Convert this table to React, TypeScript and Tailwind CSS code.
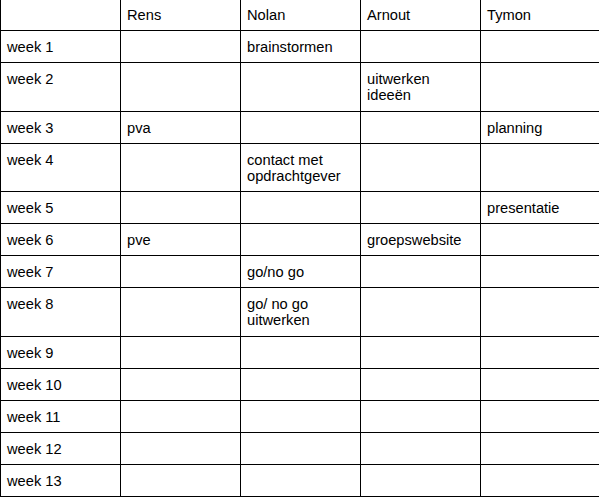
import React from "react";

const headers = ["", "Rens", "Nolan", "Arnout", "Tymon"];

type Row = { h: string; cells: string[][] };

const rows: Row[] = [
  { h: "h-[32px]", cells: [["week 1"], [], ["brainstormen"], [], []] },
  { h: "h-[49px]", cells: [["week 2"], [], [], ["uitwerken", "ideeën"], []] },
  { h: "h-[32px]", cells: [["week 3"], ["pva"], [], [], ["planning"]] },
  { h: "h-[48px]", cells: [["week 4"], [], ["contact met", "opdrachtgever"], [], []] },
  { h: "h-[32px]", cells: [["week 5"], [], [], [], ["presentatie"]] },
  { h: "h-[32px]", cells: [["week 6"], ["pve"], [], ["groepswebsite"], []] },
  { h: "h-[32px]", cells: [["week 7"], [], ["go/no go"], [], []] },
  { h: "h-[49px]", cells: [["week 8"], [], ["go/ no go", "uitwerken"], [], []] },
  { h: "h-[32px]", cells: [["week 9"], [], [], [], []] },
  { h: "h-[32px]", cells: [["week 10"], [], [], [], []] },
  { h: "h-[32px]", cells: [["week 11"], [], [], [], []] },
  { h: "h-[32px]", cells: [["week 12"], [], [], [], []] },
  { h: "h-[32px]", cells: [["week 13"], [], [], [], []] },
];

function Cell({ lines, h, last }: { lines: string[]; h: string; last: boolean }) {
  return (
    <div
      className={`${h} ${last ? "w-[119px]" : "w-[120px]"} shrink-0 border-l border-b border-black pl-[6px] pt-[8px] box-border`}
    >
      {lines.map((l, i) => (
        <div key={i} className="leading-[16px] whitespace-nowrap">
          {l}
        </div>
      ))}
    </div>
  );
}

export default function App() {
  return (
    <div
      className="w-[599px] h-[498px] overflow-hidden bg-white text-black text-[14.67px]"
      style={{ fontFamily: '"Liberation Sans", Arial, sans-serif' }}
    >
      <div className="flex flex-col">
        <div className="flex">
          {headers.map((t, i) => (
            <div
              key={i}
              className={`h-[31px] ${i === 4 ? "w-[119px]" : "w-[120px]"} shrink-0 border-l border-b border-black pl-[6px] pt-[7px] box-border`}
            >
              <div className="leading-[16px] whitespace-nowrap">{t}</div>
            </div>
          ))}
        </div>
        {rows.map((r, ri) => (
          <div key={ri} className="flex">
            {r.cells.map((c, ci) => (
              <Cell key={ci} lines={c} h={r.h} last={ci === 4} />
            ))}
          </div>
        ))}
      </div>
    </div>
  );
}
